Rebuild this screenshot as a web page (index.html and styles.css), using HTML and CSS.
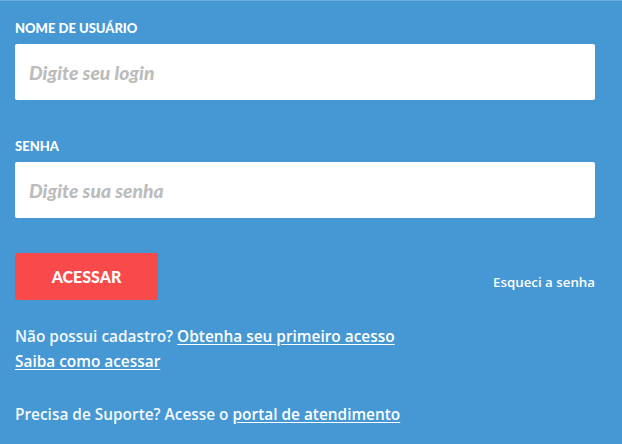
FILE: index.html
```html
<!DOCTYPE html>
<html lang="pt-BR">
<head>
<meta charset="utf-8">
<title>Login</title>
<link rel="stylesheet" href="styles.css">
</head>
<body>
<form class="login">
  <div class="field">
    <label class="field-label" for="user">NOME DE USUÁRIO</label>
    <input class="field-input" id="user" type="text" placeholder="Digite seu login">
  </div>
  <div class="field field-second">
    <label class="field-label" for="pass">SENHA</label>
    <input class="field-input" id="pass" type="password" placeholder="Digite sua senha">
  </div>
  <div class="actions">
    <button class="btn-submit" type="button">ACESSAR</button>
    <a class="forgot" href="#">Esqueci a senha</a>
  </div>
  <p class="info">Não possui cadastro? <a href="#">Obtenha seu primeiro acesso</a><br><a href="#">Saiba como acessar</a></p>
  <p class="info support">Precisa de Suporte? Acesse o <a href="#">portal de atendimento</a></p>
</form>
</body>
</html>
```

FILE: styles.css
```css
html, body {
  margin: 0;
  padding: 0;
}
body {
  background: #4598d4;
  border-top: 1px solid #6cb0e2;
  height: 443px;
  font-family: Lato, "Open Sans", sans-serif;
  color: #f4f8fb;
}
.login {
  padding: 19px 27px 0 15px;
  display: flex;
  flex-direction: column;
}
.field {
  display: flex;
  flex-direction: column;
  gap: 8px;
}
.field-second {
  margin-top: 38px;
}
.field-label {
  font-size: 13px;
  font-weight: 900;
  line-height: 16px;
  color: #ffffff;
}
.field-input {
  box-sizing: border-box;
  height: 56px;
  width: 100%;
  border: 0;
  border-radius: 2px;
  background: #ffffff;
  padding: 0 14px;
  font-family: Lato, "Open Sans", sans-serif;
  font-size: 19.3px;
  font-style: italic;
  font-weight: 900;
  outline: none;
}
.field-input::placeholder {
  color: #bcbcbc;
}
.actions {
  margin-top: 35px;
  display: flex;
  justify-content: space-between;
  align-items: flex-end;
}
.btn-submit {
  width: 143px;
  height: 47px;
  border: 0;
  border-radius: 3px;
  background: #f94a4b;
  color: #ffffff;
  font-family: Lato, "Open Sans", sans-serif;
  font-size: 16px;
  font-weight: 900;
  padding: 0;
}
.forgot {
  color: #ffffff;
  font-family: "Open Sans", sans-serif;
  font-size: 13.3px;
  font-weight: 600;
  line-height: 16px;
  text-decoration: none;
  margin-bottom: 10px;
}
.info {
  margin: 24px 0 0;
  font-family: "Open Sans", sans-serif;
  font-size: 15.4px;
  font-weight: 600;
  line-height: 25px;
}
.info a {
  color: #ffffff;
  text-decoration: underline;
  text-underline-offset: 2px;
}
.support {
  margin-top: 28px;
}
```
